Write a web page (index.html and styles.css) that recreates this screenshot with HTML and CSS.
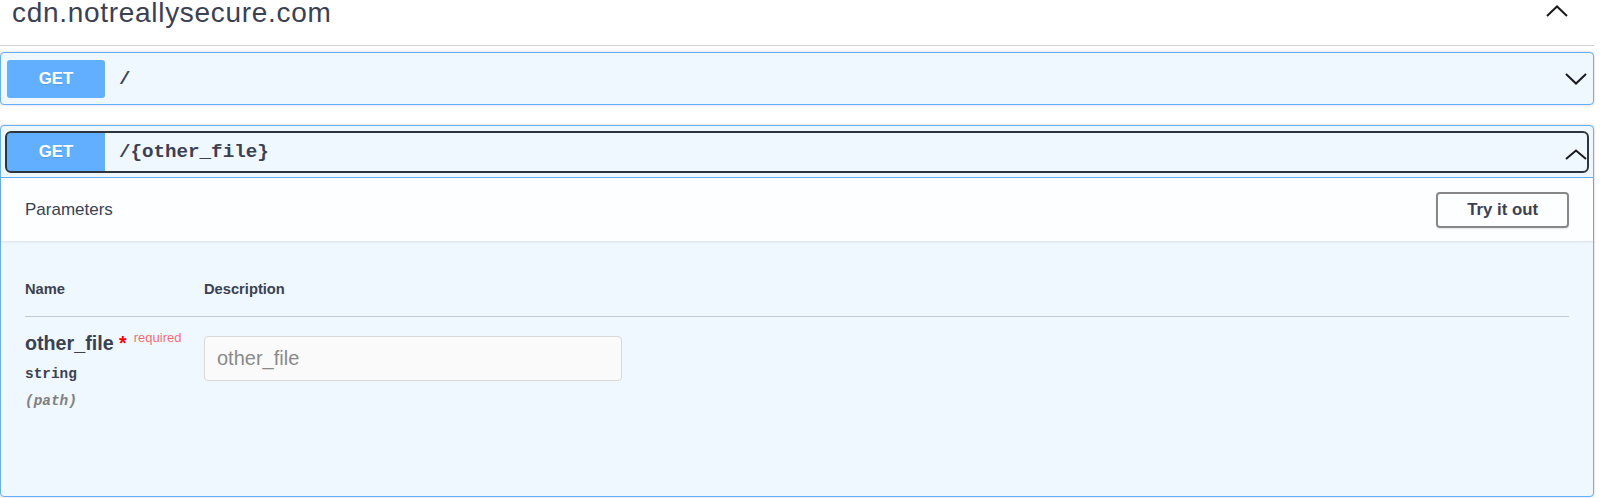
FILE: index.html
```html
<!DOCTYPE html>
<html lang="en">
<head>
<meta charset="utf-8">
<title>Swagger</title>
<link rel="stylesheet" href="styles.css">
</head>
<body>
<div class="page">
  <div class="tag">
    <h3 class="tag-title">cdn.notreallysecure.com</h3>
    <svg class="arrow tag-arrow" width="22" height="12" viewBox="0 0 22 12"><polyline points="1,11 11,1.5 21,11"/></svg>
  </div>

  <div class="opblock">
    <div class="summary">
      <span class="method">GET</span>
      <span class="path">/</span>
      <svg class="arrow" width="22" height="12" viewBox="0 0 22 12"><polyline points="1,1 11,10.5 21,1"/></svg>
    </div>
  </div>

  <div class="opblock open">
    <div class="summary">
      <div class="control">
        <span class="method">GET</span>
        <span class="path">/{other_file}</span>
        <svg class="arrow arrow-up" width="22" height="12" viewBox="0 0 22 12"><polyline points="1,10 11,1.5 21,10"/></svg>
      </div>
    </div>
    <div class="section-header">
      <h4 class="section-title">Parameters</h4>
      <button class="btn">Try it out</button>
    </div>
    <div class="params">
      <div class="params-table">
        <div class="th">Name</div>
        <div class="th">Description</div>
        <div class="td name-cell">
          <div class="param-name">other_file<span class="star">&nbsp;*</span><span class="req">required</span></div>
          <div class="param-type">string</div>
          <div class="param-in">(path)</div>
        </div>
        <div class="td">
          <input class="param-input" type="text" placeholder="other_file">
        </div>
      </div>
    </div>
  </div>
</div>
</body>
</html>
```

FILE: styles.css
```css
* { box-sizing: border-box; }
html, body { margin: 0; padding: 0; background: #fff; }
body {
  font-family: "Liberation Sans", Arial, sans-serif;
  color: #3b4151;
  overflow: hidden;
}
.page { padding: 0 6px 0 0; }

.tag {
  display: flex;
  align-items: flex-start;
  justify-content: space-between;
  height: 46px;
  border-bottom: 1px solid #d0d2d7;
  margin-bottom: 6px;
}
.tag-title {
  margin: 0;
  padding-left: 12px;
  font-size: 28px;
  line-height: 26px;
  font-weight: 400;
  letter-spacing: 0.7px;
  color: #3b4151;
}
.arrow { flex: none; }
.arrow polyline { fill: none; stroke: #1b1b1b; stroke-width: 2; }
.tag-arrow { margin: 5px 26px 0 0; }

.opblock {
  border: 1px solid #61affe;
  border-radius: 4px;
  background: #eff7ff;
  box-shadow: 0 0 3px rgba(0,0,0,.19);
  margin-bottom: 20px;
}
.summary {
  display: flex;
  align-items: center;
  padding: 7px 6px 6px;
}
.open .summary { border-bottom: 1px solid #61affe; }
.control {
  flex: 1;
  display: flex;
  align-items: center;
  border-radius: 4px;
  outline: 2px solid #2f3441;
  outline-offset: 0;
}
.method {
  flex: none;
  width: 98px;
  height: 38px;
  display: flex;
  align-items: center;
  justify-content: center;
  background: #61affe;
  border-radius: 3px;
  color: #fff;
  font-weight: 700;
  font-size: 16.8px;
  text-shadow: 0 1px 0 rgba(0,0,0,.1);
}
.control .method { border-radius: 3px 0 0 3px; }
.path {
  flex: 1;
  padding-left: 14px;
  font-family: "Liberation Mono", "Courier New", monospace;
  font-weight: 700;
  font-size: 19.2px;
  color: #3b4151;
}
.arrow-up { margin-top: 6px; }

.section-header {
  display: flex;
  align-items: center;
  justify-content: space-between;
  min-height: 63px;
  padding: 0 24px;
  background: rgba(255,255,255,.8);
  box-shadow: 0 1px 2px rgba(0,0,0,.1);
}
.section-title {
  margin: 0;
  font-size: 17px;
  font-weight: 400;
  color: #3b4151;
}
.btn {
  height: 36px;
  padding: 0 29px;
  border: 2px solid #888;
  border-radius: 4px;
  background: transparent;
  box-shadow: 0 1px 2px rgba(0,0,0,.1);
  font-family: "Liberation Sans", Arial, sans-serif;
  font-weight: 700;
  font-size: 16.8px;
  color: #3b4151;
}

.params {
  height: 255px;
  padding: 39px 24px 0;
}
.params-table {
  display: grid;
  grid-template-columns: 179px 1fr;
}
.th {
  font-size: 14.7px;
  line-height: 18px;
  font-weight: 700;
  padding-bottom: 18px;
  border-bottom: 1px solid #c3c8d2;
}
.name-cell { padding-top: 9px; }
.param-name {
  font-size: 19.7px;
  line-height: 23px;
  font-weight: 700;
  color: #3b4151;
}
.star { color: red; }
.req {
  padding-left: 7px;
  font-size: 13px;
  font-weight: 400;
  color: rgba(255,0,0,.6);
  vertical-align: 8px;
}
.param-type {
  margin-top: 11px;
  font-family: "Liberation Mono", "Courier New", monospace;
  font-weight: 700;
  font-size: 14.4px;
  line-height: 17px;
}
.param-in {
  margin-top: 10px;
  font-family: "Liberation Mono", "Courier New", monospace;
  font-weight: 700;
  font-style: italic;
  font-size: 14.4px;
  line-height: 17px;
  color: #808080;
}
.param-input {
  margin-top: 19px;
  width: 418px;
  height: 45px;
  padding: 0 12px;
  border: 1px solid #d9d9d9;
  border-radius: 4px;
  background: #fafafa;
  font-family: "Liberation Sans", Arial, sans-serif;
  font-size: 20px;
  color: #3b4151;
}
.param-input::placeholder { color: #8a8a8a; }
```
